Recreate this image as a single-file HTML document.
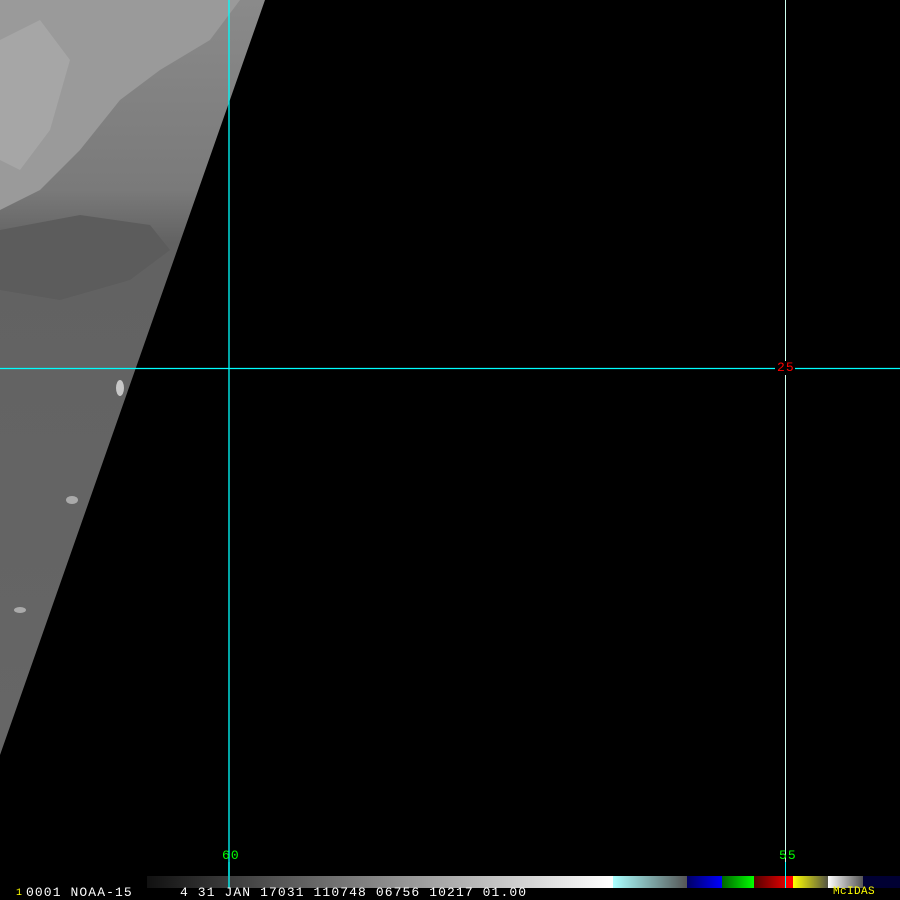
<!DOCTYPE html>
<html><head><style>
body{margin:0;background:#000;width:900px;height:900px;overflow:hidden;position:relative;font-family:"Liberation Mono",monospace}
.t{position:absolute;font-size:13px;line-height:13px;color:#fff;white-space:pre;letter-spacing:1.1px}
</style></head><body>
<svg width="900" height="900" style="position:absolute;left:0;top:0">
<defs>
<linearGradient id="g" x1="0" y1="0" x2="0" y2="1">
<stop offset="0" stop-color="#8a8a8a"/><stop offset="0.25" stop-color="#7a7a7a"/><stop offset="0.32" stop-color="#626262"/><stop offset="1" stop-color="#666"/>
</linearGradient>
<clipPath id="c"><polygon points="0,0 265,0 0,755"/></clipPath>
</defs>
<g clip-path="url(#c)">
<rect x="0" y="0" width="270" height="760" fill="url(#g)"/>
<path d="M0,0 L240,0 L210,40 L160,70 L120,100 L80,150 L40,190 L0,210 Z" fill="#9a9a9a"/>
<path d="M0,40 L40,20 L70,60 L50,130 L20,170 L0,160 Z" fill="#a6a6a6"/>
<path d="M0,230 L80,215 L150,225 L170,250 L130,280 L60,300 L0,290 Z" fill="#5c5c5c"/>
<ellipse cx="120" cy="388" rx="4" ry="8" fill="#c8c8c8"/>
<ellipse cx="72" cy="500" rx="6" ry="4" fill="#aaa"/>
<ellipse cx="20" cy="610" rx="6" ry="3" fill="#aaa"/>
</g>
<line x1="229" y1="0" x2="229" y2="876" stroke="#0ff" stroke-width="1.3"/>
<line x1="785.5" y1="0" x2="785.5" y2="876" stroke="#cfe" stroke-width="1"/>
<line x1="0" y1="368.5" x2="900" y2="368.5" stroke="#0ff" stroke-width="1.3"/>
<rect x="775" y="361" width="20" height="14" fill="#000"/>
<defs>
<linearGradient id="gr" x1="0" x2="1"><stop offset="0" stop-color="#111"/><stop offset="1" stop-color="#fff"/></linearGradient>
<linearGradient id="cy" x1="0" x2="1"><stop offset="0" stop-color="#aff"/><stop offset="1" stop-color="#555"/></linearGradient>
<linearGradient id="bl" x1="0" x2="1"><stop offset="0" stop-color="#006"/><stop offset="1" stop-color="#00f"/></linearGradient>
<linearGradient id="gn" x1="0" x2="1"><stop offset="0" stop-color="#060"/><stop offset="1" stop-color="#0f0"/></linearGradient>
<linearGradient id="rd" x1="0" x2="1"><stop offset="0" stop-color="#500"/><stop offset="1" stop-color="#d00"/></linearGradient>
<linearGradient id="yl" x1="0" x2="1"><stop offset="0" stop-color="#ff0"/><stop offset="1" stop-color="#554"/></linearGradient>
<linearGradient id="wg" x1="0" x2="1"><stop offset="0" stop-color="#fff"/><stop offset="1" stop-color="#555"/></linearGradient>
</defs>
<rect x="147" y="876" width="466" height="12" fill="url(#gr)"/>
<rect x="613" y="876" width="74" height="12" fill="url(#cy)"/>
<rect x="687" y="876" width="35" height="12" fill="url(#bl)"/>
<rect x="722" y="876" width="32" height="12" fill="url(#gn)"/>
<rect x="754" y="876" width="31" height="12" fill="url(#rd)"/>
<rect x="785" y="876" width="8" height="12" fill="#f00"/>
<rect x="793" y="876" width="35" height="12" fill="url(#yl)"/>
<rect x="828" y="876" width="35" height="12" fill="url(#wg)"/>
<rect x="863" y="876" width="37" height="12" fill="#003"/>
<line x1="229" y1="862" x2="229" y2="888" stroke="#0ff" stroke-width="1.3"/>
<line x1="785.5" y1="862" x2="785.5" y2="888" stroke="#0ff" stroke-width="1"/>
</svg>
<div class="t" style="left:777px;top:361px;color:#f00">25</div>
<div class="t" style="left:222px;top:849px;color:#0f0">60</div>
<div class="t" style="left:779px;top:849px;color:#0f0">55</div>
<div class="t" style="left:16px;top:887px;color:#ff0;font-size:10px">1</div>
<div class="t" style="left:26px;top:886px">0001 NOAA-15</div>
<div class="t" style="left:180px;top:886px">4 31 JAN 17031 110748 06756 10217 01.00</div>
<div class="t" style="left:833px;top:886px;color:#ff0;font-size:11px;letter-spacing:0.4px">McIDAS</div>
</body></html>
